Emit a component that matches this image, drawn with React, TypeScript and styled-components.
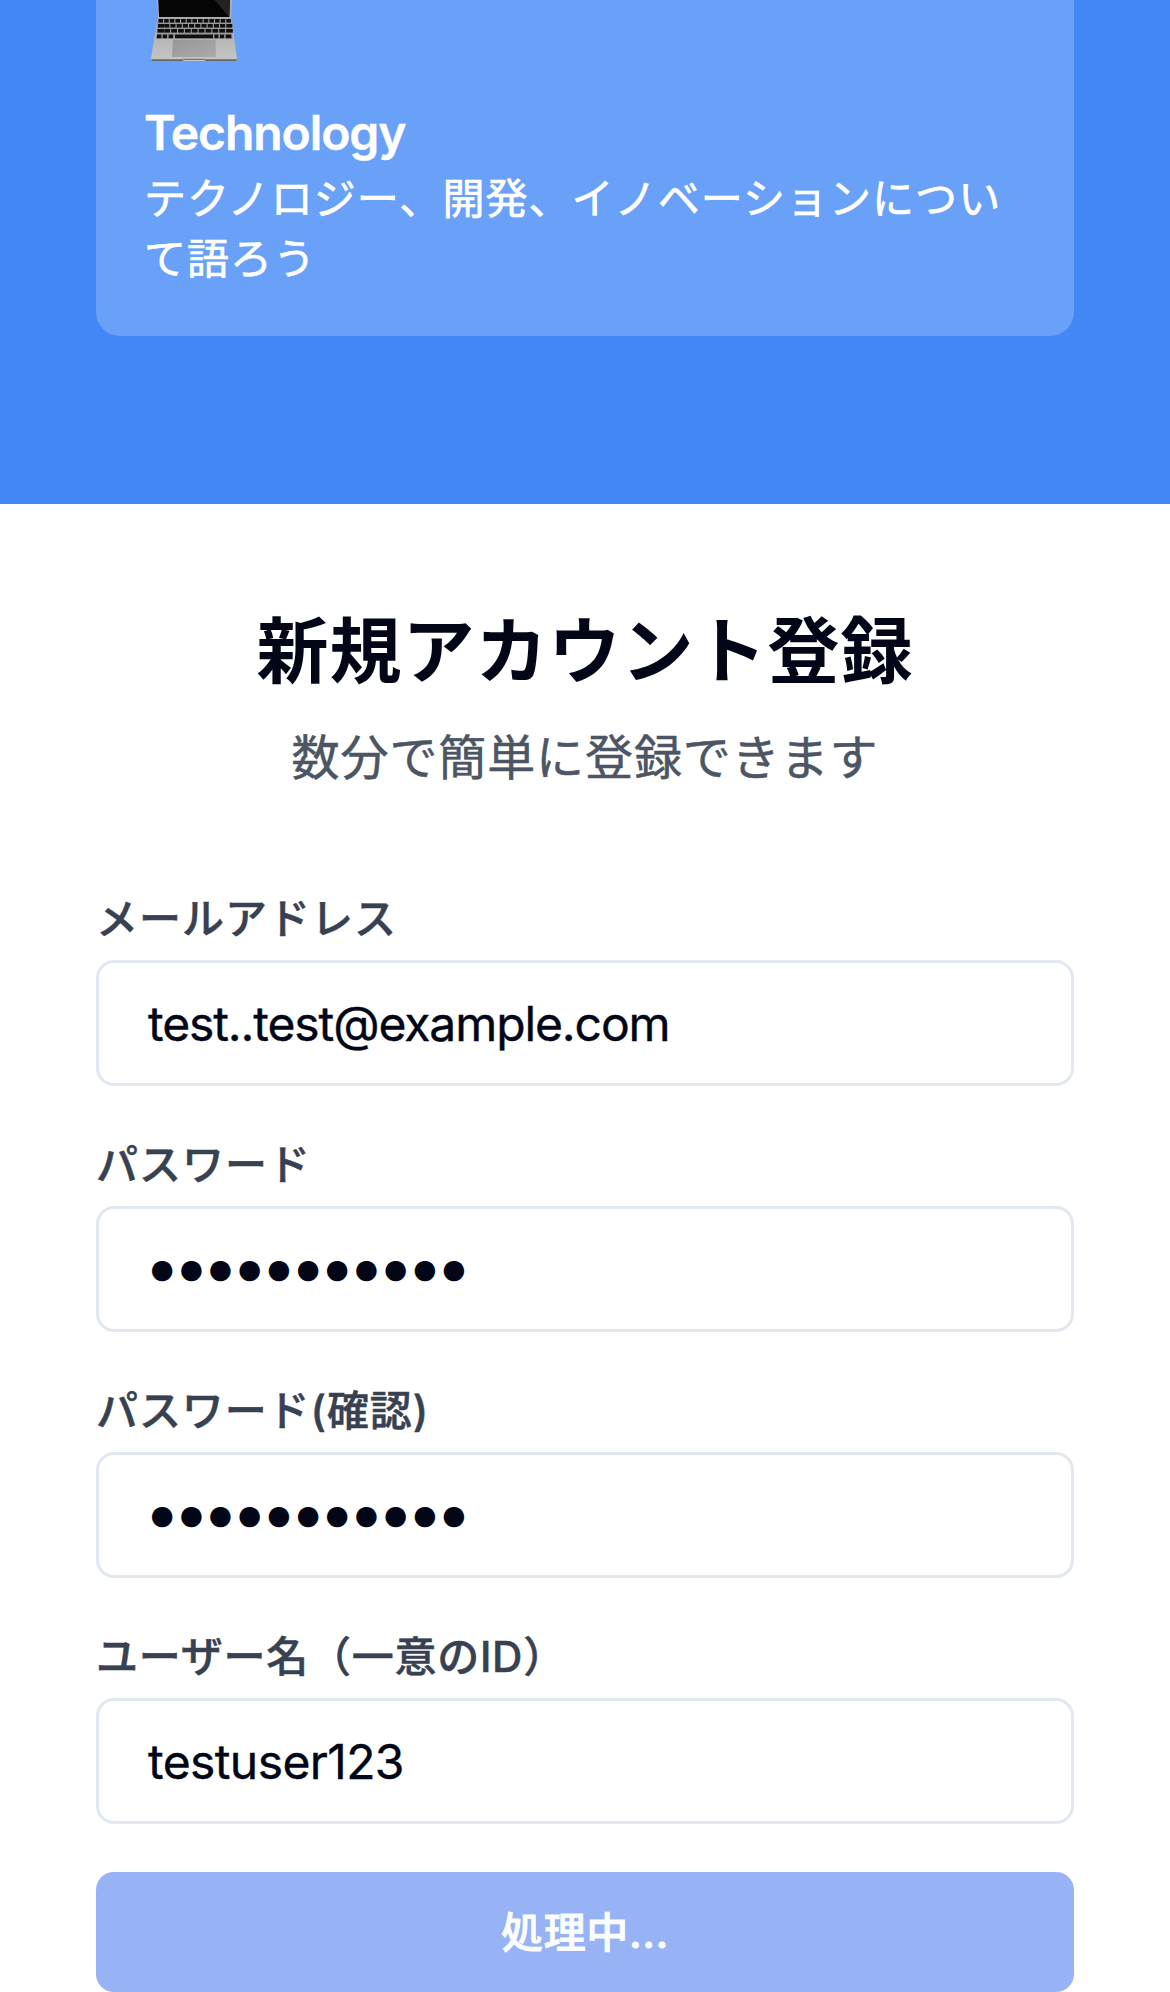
import React from "react";
import styled, { createGlobalStyle } from "styled-components";

const GlobalStyle = createGlobalStyle`
  *, *::before, *::after { box-sizing: border-box; }
  html, body { margin: 0; padding: 0; background: #fff; }
  body {
    width: 1170px;
    height: 1992px;
    overflow: hidden;
    font-family: Inter, "Noto Sans CJK JP", sans-serif;
    color: #020617;
  }
`;

const Page = styled.div`
  display: flex;
  flex-direction: column;
  height: 1992px;
`;

const Hero = styled.section`
  height: 504px;
  padding: 0 96px;
  background: #4387f7;
`;

const TopicCard = styled.article`
  height: 336px;
  padding: 0 48px 47px;
  border-radius: 0 0 24px 24px;
  background: #69a0f8;
  color: #fff;
`;

const Laptop = styled.svg`
  display: block;
  width: 102px;
  height: 97px;
`;

const TopicTitle = styled.h3`
  margin: 0;
  font-size: 48px;
  line-height: 72px;
  font-weight: 600;
  letter-spacing: -1.1px;
  -webkit-text-stroke: 0.4px currentColor;
`;

const TopicText = styled.p`
  margin: 0;
  font-size: 42px;
  line-height: 60px;
  letter-spacing: 1.05px;
  white-space: nowrap;
  -webkit-text-stroke: 0.7px currentColor;
`;

const Registration = styled.main`
  flex: 1;
  display: flex;
  flex-direction: column;
  padding: 99px 96px 0;
`;

const Heading = styled.h1`
  margin: 0;
  text-align: center;
  font-size: 72px;
  line-height: 96px;
  font-weight: 700;
  letter-spacing: 1px;
`;

const Lead = styled.p`
  margin: 23px 0 95px;
  text-align: center;
  font-size: 48px;
  line-height: 72px;
  letter-spacing: 0.9px;
  color: #4b5563;
  -webkit-text-stroke: 0.5px currentColor;
`;

const Form = styled.form`
  display: flex;
  flex-direction: column;
  gap: 48px;
`;

const Field = styled.div`
  display: flex;
  flex-direction: column;
  gap: 11px;

  & + & {
    padding-top: 1px;
  }
`;

const Label = styled.label<{ $tracking: number }>`
  font-size: 42px;
  line-height: 60px;
  font-weight: 500;
  letter-spacing: ${(p) => p.$tracking}px;
  color: #374151;
  white-space: nowrap;
  -webkit-text-stroke: 0.5px currentColor;
`;

const InputBox = styled.div`
  display: flex;
  align-items: center;
  height: 126px;
  padding: 2px 48px 0 49px;
  border: 3px solid #e2e8f0;
  border-radius: 18px;
  background: #fff;
`;

const Value = styled.span<{ $tracking: number }>`
  font-size: 48px;
  line-height: 72px;
  letter-spacing: ${(p) => p.$tracking}px;
  -webkit-text-stroke: 0.4px currentColor;
`;

const Mask = styled.span`
  padding: 0 0 3px 2.5px;
  font-family: "DejaVu Sans", sans-serif;
  font-size: 26.7px;
  line-height: 72px;
  letter-spacing: 5.9px;
`;

const Submit = styled.button`
  height: 120px;
  padding: 2px 0 0;
  border: 0;
  border-radius: 18px;
  background: #97b2f5;
  color: #fcfdff;
  font-family: inherit;
  font-size: 42px;
  line-height: 60px;
  font-weight: 500;
  letter-spacing: 0.6px;
  -webkit-text-stroke: 0.9px currentColor;
`;

const keyRows = [
  { y: 19, left: 158, right: 231.5, count: 13 },
  { y: 24, left: 157.5, right: 232, count: 12 },
  { y: 29, left: 157, right: 232.5, count: 11 },
];

function LaptopIcon() {
  return (
    <Laptop viewBox="144 0 102 97" aria-hidden="true">
      <defs>
        <linearGradient id="deck" x1="0" y1="0" x2="0" y2="1">
          <stop offset="0" stopColor="#a9a9a9" />
          <stop offset="1" stopColor="#c5c5c5" />
        </linearGradient>
        <linearGradient id="pad" x1="0" y1="0" x2="1" y2="1">
          <stop offset="0" stopColor="#979797" />
          <stop offset="1" stopColor="#aaaaaa" />
        </linearGradient>
      </defs>
      <path d="M157 0H232L231 18H158Z" fill="#aeb2b8" />
      <path d="M158.3 0H230L229.3 17H159Z" fill="#050505" />
      <path d="M214.5 0H230L229.3 17Z" fill="#222" />
      <path d="M157.5 18H231.5L237 58.5Q237.3 61 235.5 61H152.5Q150.7 61 151 58.5Z" fill="url(#deck)" />
      <path d="M151.3 59.2H182L184 60.4L182 61H152Q151 60.6 151.3 59.2ZM206 59.2H236.8Q237 60.6 236 61H206L204 60.4Z" fill="#676767" />
      <path d="M182 58.8H206L204 60H184Z" fill="#777" />
      <path d="M157.5 18.5H231.5L232.5 39H156Z" fill="#9a9a9a" />
      {keyRows.map((row) => {
        const step = (row.right - row.left) / row.count;
        return Array.from({ length: row.count }, (_, i) => {
          const edge = row.y > 19 && (i === 0 || i === row.count - 1);
          return (
            <rect
              key={`${row.y}-${i}`}
              x={row.left + i * step + 0.5}
              y={row.y}
              width={edge ? step - 0.2 : step - 1.1}
              height={3.6}
              fill="#101010"
            />
          );
        });
      })}
      <path d="M157 34.4h4.4v3.8h-4.6zM162.7 34.4h4.4v3.8h-4.4zM168.6 34.4h4.6v3.8h-4.6zM175 34.4h38v3.8h-38zM214.4 34.4h4v3.8h-4zM219.8 34.4h4.4v3.8h-4.4zM225.6 34.4h5.6l.3 3.8h-5.9z" fill="#101010" />
      <path d="M173 39.8H215.5L216 57H172Z" fill="url(#pad)" />
    </Laptop>
  );
}

interface FieldSpec {
  label: string;
  labelTracking: number;
  value: string;
  masked?: boolean;
  tracking?: number;
}

const fields: FieldSpec[] = [
  { label: "メールアドレス", labelTracking: 1, value: "test..test@example.com", tracking: -1.1 },
  { label: "パスワード", labelTracking: 1, value: "●●●●●●●●●●●", masked: true },
  { label: "パスワード(確認)", labelTracking: 0.9, value: "●●●●●●●●●●●", masked: true },
  { label: "ユーザー名（一意のID）", labelTracking: 0.75, value: "testuser123", tracking: -0.6 },
];

export default function App() {
  return (
    <Page lang="ja">
      <GlobalStyle />
      <Hero>
        <TopicCard>
          <LaptopIcon />
          <TopicTitle>Technology</TopicTitle>
          <TopicText>
            テクノロジー、開発、イノベーションについ
            <br />
            て語ろう
          </TopicText>
        </TopicCard>
      </Hero>
      <Registration>
        <Heading>新規アカウント登録</Heading>
        <Lead>数分で簡単に登録できます</Lead>
        <Form>
          {fields.map((f) => (
            <Field key={f.label}>
              <Label $tracking={f.labelTracking}>{f.label}</Label>
              <InputBox>
                {f.masked ? <Mask>{f.value}</Mask> : <Value $tracking={f.tracking ?? 0}>{f.value}</Value>}
              </InputBox>
            </Field>
          ))}
          <Submit type="button">処理中...</Submit>
        </Form>
      </Registration>
    </Page>
  );
}
